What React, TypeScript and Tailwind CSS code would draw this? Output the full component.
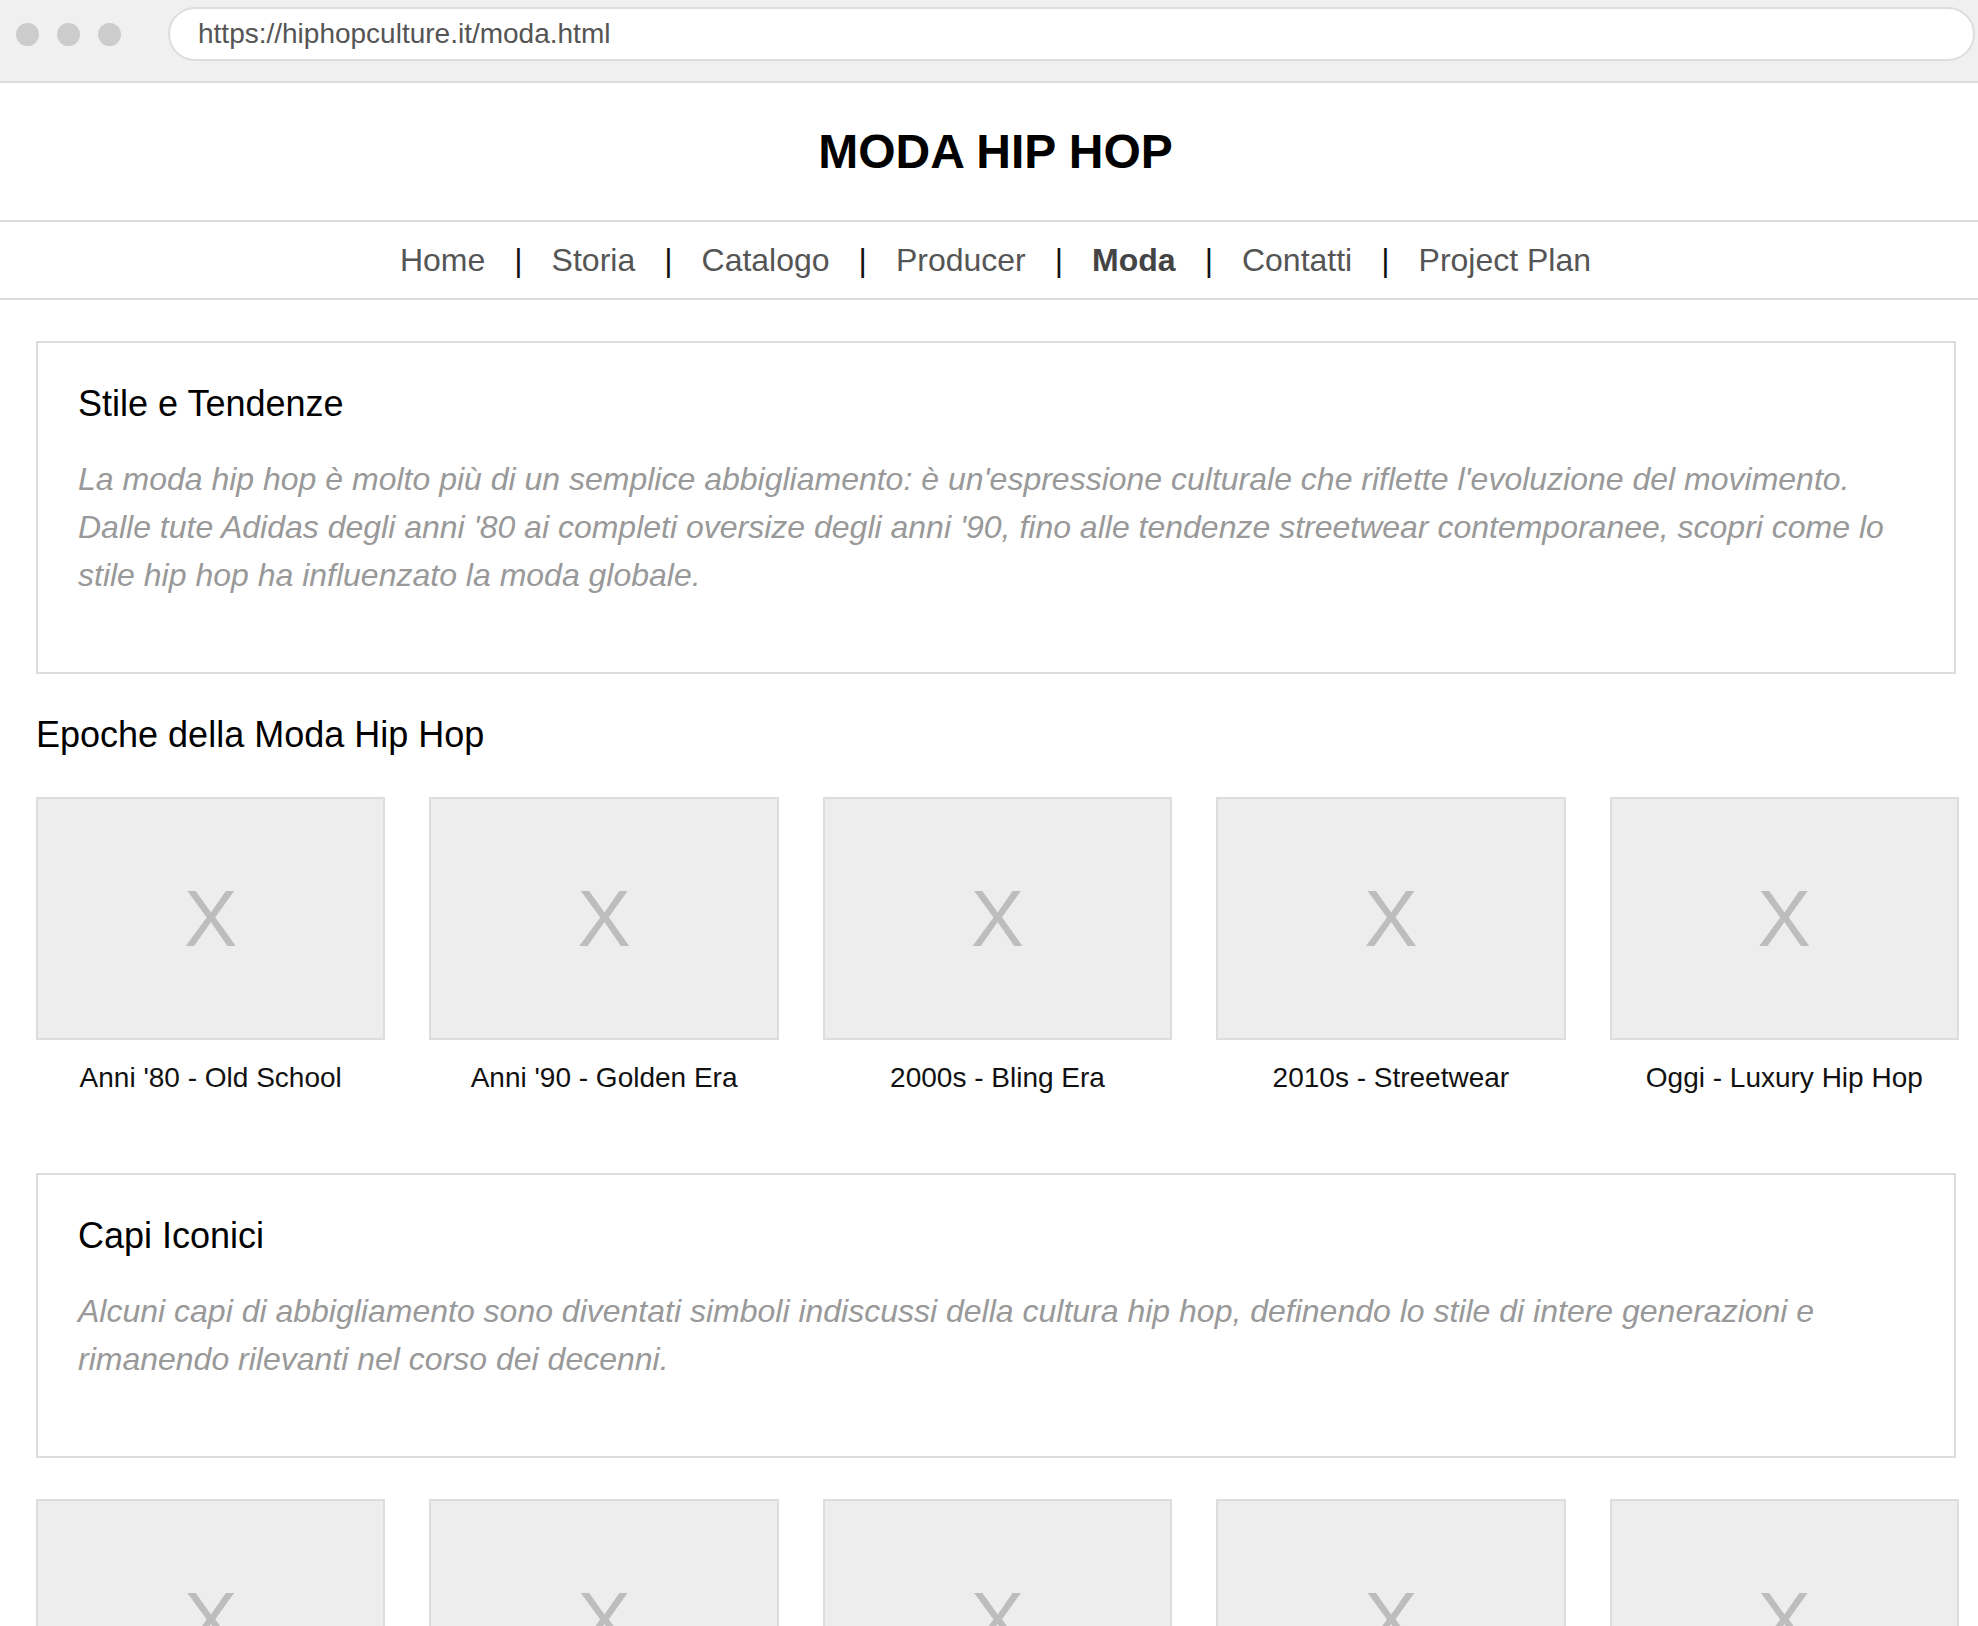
import React from "react";

const font = { fontFamily: '"Liberation Sans", Arial, Helvetica, sans-serif' };

const navItems = ["Home", "Storia", "Catalogo", "Producer", "Moda", "Contatti", "Project Plan"];

const epoche = [
  "Anni '80 - Old School",
  "Anni '90 - Golden Era",
  "2000s - Bling Era",
  "2010s - Streetwear",
  "Oggi - Luxury Hip Hop",
];

const capi = ["Tute Adidas", "Felpe Oversize", "Catene d'Oro", "Timberland", "Cappelli Snapback"];

function Card({ label }: { label: string }) {
  return (
    <div className="flex flex-col items-center">
      <div className="w-full h-[243px] bg-[#ededed] border-2 border-[#dddddd] flex items-center justify-center">
        <span className="text-[80px] leading-[92px] text-[#bdbdbd]">X</span>
      </div>
      <div className="mt-[22px] text-[28px] leading-[32px] text-[#111] text-center">{label}</div>
    </div>
  );
}

function Box({ title, children }: { title: string; children: React.ReactNode }) {
  return (
    <section className="w-[1920px] border-2 border-[#dddddd] px-[40px] pt-[40px] pb-[40px]">
      <h2 className="text-[36px] leading-[41px] text-black font-normal">{title}</h2>
      <p className="mt-[31px] mb-[33px] text-[32px] leading-[48px] italic text-[#999999]">{children}</p>
    </section>
  );
}

export default function App() {
  return (
    <div className="w-[1978px] h-[1626px] overflow-hidden bg-white" style={font}>
      {/* browser chrome */}
      <div className="h-[83px] bg-[#f0f0f0] border-b-2 border-[#dddddd] flex items-start pt-[7px]">
        <div className="flex items-center gap-[18px] pl-[16px] h-[54px]">
          <span className="w-[23px] h-[23px] rounded-full bg-[#cccccc]" />
          <span className="w-[23px] h-[23px] rounded-full bg-[#cccccc]" />
          <span className="w-[23px] h-[23px] rounded-full bg-[#cccccc]" />
        </div>
        <div className="ml-[47px] mr-[3px] flex-1 h-[54px] bg-white border-2 border-[#dddddd] rounded-full flex items-center pl-[28px]">
          <span className="text-[28px] text-[#555555] leading-none">https://hiphopculture.it/moda.html</span>
        </div>
      </div>

      {/* header */}
      <header className="h-[139px] border-b-2 border-[#dddddd] flex items-center justify-center pl-[13px]">
        <h1 className="text-[48px] font-bold text-black leading-[55px]">MODA HIP HOP</h1>
      </header>

      {/* nav */}
      <nav className="h-[78px] border-b-2 border-[#dddddd] flex items-center justify-center gap-[29px] pl-[13px] text-[32px] leading-[37px]">
        {navItems.map((item, i) => (
          <React.Fragment key={item}>
            {i > 0 && <span className="text-[#111111]">|</span>}
            <span className={item === "Moda" ? "font-bold text-[#444444]" : "text-[#555555]"}>{item}</span>
          </React.Fragment>
        ))}
      </nav>

      {/* main */}
      <main className="pl-[36px] pt-[41px]">
        <Box title="Stile e Tendenze">
          La moda hip hop è molto più di un semplice abbigliamento: è un'espressione culturale che riflette l'evoluzione del movimento. Dalle tute Adidas degli anni '80 ai completi oversize degli anni '90, fino alle tendenze streetwear contemporanee, scopri come lo stile hip hop ha influenzato la moda globale.
        </Box>

        <h2 className="mt-[40px] text-[36px] leading-[41px] text-black">Epoche della Moda Hip Hop</h2>

        <div className="mt-[42px] w-[1923px] grid grid-cols-5 gap-x-[44px]">
          {epoche.map((e) => (
            <Card key={e} label={e} />
          ))}
        </div>

        <div className="mt-[79px]">
          <Box title="Capi Iconici">
            Alcuni capi di abbigliamento sono diventati simboli indiscussi della cultura hip hop, definendo lo stile di intere generazioni e rimanendo rilevanti nel corso dei decenni.
          </Box>
        </div>

        <div className="mt-[41px] w-[1923px] grid grid-cols-5 gap-x-[44px]">
          {capi.map((c) => (
            <Card key={c} label={c} />
          ))}
        </div>
      </main>
    </div>
  );
}
